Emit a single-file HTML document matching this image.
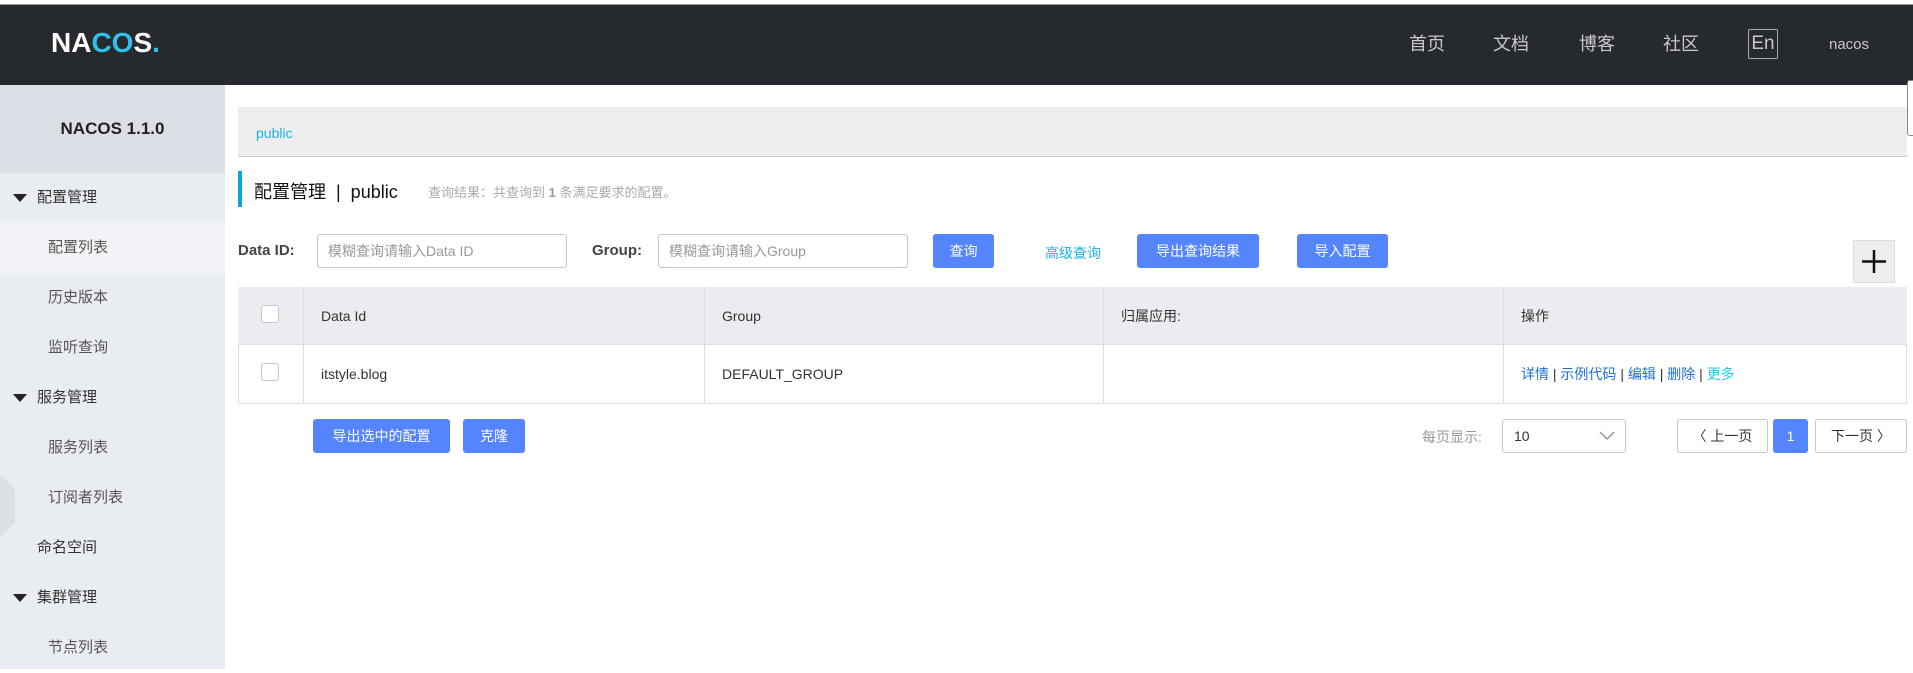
<!DOCTYPE html>
<html><head><meta charset="utf-8"><style>
*{box-sizing:border-box;margin:0;padding:0}
body{width:1913px;height:669px;overflow:hidden;background:#fff;font-family:"Liberation Sans","Noto Sans CJK SC",sans-serif;font-size:14px;color:#333;position:relative}
.a{position:absolute}
.hdr{left:0;top:4px;width:1913px;height:81px;background:#262a2f;border-top:1px solid #999}
.nav{top:30px;color:#c8c8c8;font-size:18px}
.side{left:0;top:85px;width:225px;height:584px;background:#e9ecf1}
.mi{left:0;width:225px;height:50px;line-height:50px;font-size:15px;color:#333}
.tri{position:absolute;left:13px;top:21px;width:0;height:0;border-left:7px solid transparent;border-right:7px solid transparent;border-top:8px solid #222}
.btn{background:#5584ff;color:#fff;border-radius:3px;text-align:center;font-size:14px}
.inp{border:1px solid #c4c6cf;border-radius:3px;color:#999;font-size:14px;padding-left:10px}
.th{top:287px;height:58px;line-height:58px;padding-left:17px;border-right:1px solid #dcdee3}
.td{top:345px;height:59px;line-height:59px;padding-left:17px;border-right:1px solid #dcdee3}
.cb{width:18px;height:18px;border:1px solid #c4c6cf;border-radius:3px;background:#fff}
.pg{border:1px solid #c4c6cf;border-radius:3px;height:34px;line-height:32px;text-align:center;background:#fff}
</style></head><body>
<div class="a hdr"></div>
<div class="a" style="left:51px;top:27px;font-size:28px;font-weight:bold;color:#fff;letter-spacing:0px">NA<span style="color:#2cc0ea">CO</span>S<span style="color:#2cc0ea">.</span></div>
<div class="a nav" style="left:1409px">首页</div>
<div class="a nav" style="left:1493px">文档</div>
<div class="a nav" style="left:1579px">博客</div>
<div class="a nav" style="left:1663px">社区</div>
<div class="a" style="left:1748px;top:29px;width:30px;height:30px;border:1px solid #aaa;border-radius:2px;color:#c8c8c8;font-size:19px;text-align:center;line-height:28px">En</div>
<div class="a" style="left:1829px;top:36px;color:#c8c8c8;font-size:15px">nacos</div>
<div class="a" style="left:1907px;top:80px;width:6px;height:56px;border:1px solid #888;border-right:none;border-radius:3px 0 0 3px;background:#fff"></div>

<div class="a side"></div>
<div class="a" style="left:0;top:85px;width:225px;height:88px;background:#dcdfe5;text-align:center;line-height:88px;font-weight:bold;font-size:17px;color:#222">NACOS 1.1.0</div>
<div class="a mi" style="top:173px;padding-left:37px"><span class="tri"></span>配置管理</div>
<div class="a mi" style="top:223px;padding-left:48px;background:#f2f3f6;color:#555">配置列表</div>
<div class="a mi" style="top:273px;padding-left:48px;color:#555">历史版本</div>
<div class="a mi" style="top:323px;padding-left:48px;color:#555">监听查询</div>
<div class="a mi" style="top:373px;padding-left:37px"><span class="tri"></span>服务管理</div>
<div class="a mi" style="top:423px;padding-left:48px;color:#555">服务列表</div>
<div class="a mi" style="top:473px;padding-left:48px;color:#555">订阅者列表</div>
<div class="a mi" style="top:523px;padding-left:37px">命名空间</div>
<div class="a mi" style="top:573px;padding-left:37px"><span class="tri"></span>集群管理</div>
<div class="a mi" style="top:623px;padding-left:48px;color:#555">节点列表</div>
<svg class="a" style="left:0;top:475px" width="16" height="62"><polygon points="0,0 15,14 15,48 0,62" fill="#dcdfe4"/></svg>

<div class="a" style="left:238px;top:107px;width:1669px;height:50px;background:#eee;border-bottom:1px solid #ccc"></div>
<div class="a" style="left:256px;top:125px;color:#1fb1e6;font-size:14px">public</div>
<div class="a" style="left:238px;top:171px;width:4px;height:36px;background:#0aa5d9"></div>
<div class="a" style="left:254px;top:178px;font-size:18px;color:#111">配置管理 &nbsp;|&nbsp; public</div>
<div class="a" style="left:428px;top:182px;font-size:13px;color:#aaa">查询结果：共查询到 <b style="color:#999">1</b> 条满足要求的配置。</div>

<div class="a" style="left:238px;top:242px;font-weight:bold;font-size:15px;color:#444">Data ID:</div>
<div class="a inp" style="left:317px;top:234px;width:250px;height:34px;line-height:32px">模糊查询请输入Data ID</div>
<div class="a" style="left:592px;top:242px;font-weight:bold;font-size:15px;color:#444">Group:</div>
<div class="a inp" style="left:658px;top:234px;width:250px;height:34px;line-height:32px">模糊查询请输入Group</div>
<div class="a btn" style="left:933px;top:234px;width:61px;height:34px;line-height:34px">查询</div>
<div class="a" style="left:1045px;top:243px;color:#1fb1e6">高级查询</div>
<div class="a btn" style="left:1137px;top:234px;width:122px;height:34px;line-height:34px">导出查询结果</div>
<div class="a btn" style="left:1297px;top:234px;width:91px;height:34px;line-height:34px">导入配置</div>
<div class="a" style="left:1853px;top:240px;width:42px;height:43px;background:#eee;border:1px solid #ddd"><svg width="40" height="41"><path d="M20 9V32M8 20.5H32" stroke="#111" stroke-width="2.5"/></svg></div>

<div class="a" style="left:238px;top:287px;width:1669px;height:117px;border:1px solid #dcdee3"></div>
<div class="a" style="left:238px;top:287px;width:1669px;height:58px;background:#ebecf0;border-bottom:1px solid #dcdee3"></div>
<div class="a th" style="left:238px;width:66px"></div>
<div class="a cb" style="left:261px;top:305px"></div>
<div class="a th" style="left:304px;width:401px">Data Id</div>
<div class="a th" style="left:705px;width:399px">Group</div>
<div class="a th" style="left:1104px;width:400px">归属应用:</div>
<div class="a th" style="left:1504px;width:403px;border-right:none">操作</div>
<div class="a td" style="left:238px;width:66px"></div>
<div class="a cb" style="left:261px;top:363px"></div>
<div class="a td" style="left:304px;width:401px">itstyle.blog</div>
<div class="a td" style="left:705px;width:399px">DEFAULT_GROUP</div>
<div class="a td" style="left:1104px;width:400px"></div>
<div class="a td" style="left:1504px;width:403px;border-right:none;color:#1e6fd9">详情 <span style="color:#333">|</span> 示例代码 <span style="color:#333">|</span> 编辑 <span style="color:#333">|</span> 删除 <span style="color:#333">|</span> <span style="color:#2ec6e6">更多</span></div>

<div class="a btn" style="left:313px;top:419px;width:137px;height:34px;line-height:34px">导出选中的配置</div>
<div class="a btn" style="left:463px;top:419px;width:62px;height:34px;line-height:34px">克隆</div>
<div class="a" style="left:1422px;top:427px;color:#999">每页显示:</div>
<div class="a pg" style="left:1502px;top:419px;width:124px;text-align:left;padding-left:11px;color:#333">10<svg class="a" style="right:10px;top:11px" width="16" height="10"><path d="M1 1L8 8L15 1" stroke="#999" fill="none" stroke-width="1.5"/></svg></div>
<div class="a pg" style="left:1677px;top:419px;width:91px">〈 上一页</div>
<div class="a pg" style="left:1773px;top:419px;width:35px;background:#5584ff;border-color:#5584ff;color:#fff">1</div>
<div class="a pg" style="left:1815px;top:419px;width:92px">下一页 〉</div>
</body></html>
